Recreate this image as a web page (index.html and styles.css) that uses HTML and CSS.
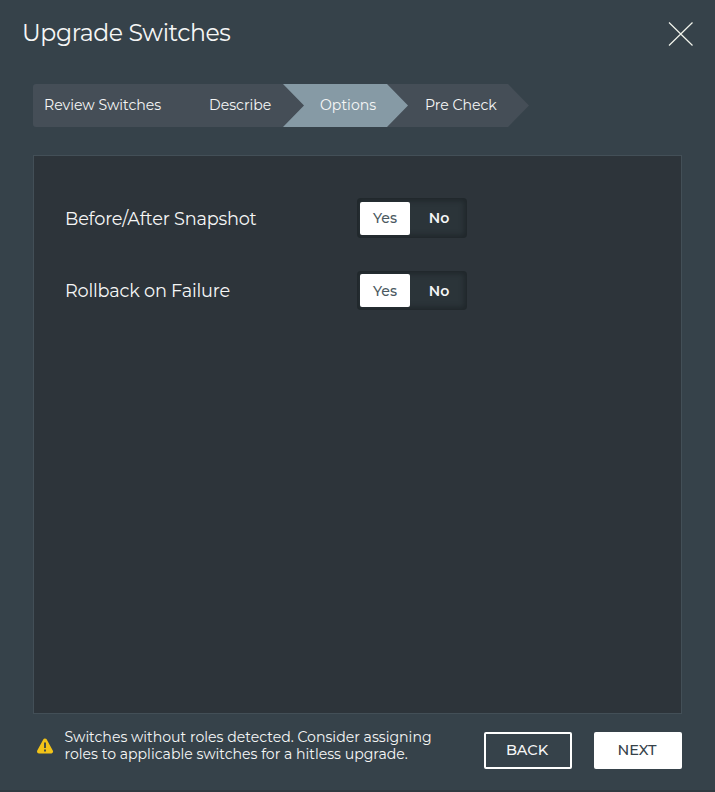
FILE: index.html
```html
<!DOCTYPE html>
<html lang="en">
<head>
<meta charset="utf-8">
<title>Upgrade Switches</title>
<link rel="stylesheet" href="styles.css">
</head>
<body>
<main class="dialog">
  <header class="header">
    <h1 class="title">Upgrade Switches</h1>
    <button class="close" aria-label="Close">
      <svg width="26" height="24" viewBox="0 0 26 24"><path d="M1 .5 24.500 23.500M24.500 .5 1 23.500" fill="none" stroke="#f2f4ec" stroke-width="1.200"/></svg>
    </button>
  </header>
  <ol class="steps">
    <li class="step step-review"><span>Review Switches</span></li>
    <li class="step step-describe"><span>Describe</span></li>
    <li class="step step-options"><span>Options</span></li>
    <li class="step step-check"><span>Pre Check</span></li>
  </ol>
  <section class="panel">
    <div class="option">
      <span class="label">Before/After Snapshot</span>
      <div class="toggle"><button class="choice selected">Yes</button><button class="choice">No</button></div>
    </div>
    <div class="option">
      <span class="label">Rollback on Failure</span>
      <div class="toggle toggle-short"><button class="choice selected">Yes</button><button class="choice">No</button></div>
    </div>
  </section>
  <footer class="footer">
    <svg class="warning" width="18" height="17" viewBox="0 0 18 17"><path d="M9 2.500 15 13.500H3Z" fill="#f2c318" stroke="#f2c318" stroke-width="4" stroke-linejoin="round"/><path d="M9 4.500v5.500M9 11.500v2" stroke="#36424a" stroke-width="1.800"/></svg>
    <p class="message">Switches without roles detected. Consider assigning<br>roles to applicable switches for a hitless upgrade.</p>
    <button class="button back">BACK</button>
    <button class="button next">NEXT</button>
  </footer>
</main>
</body>
</html>
```
FILE: styles.css
```css
* { box-sizing: border-box; }
body { margin: 0; background: #36424a; }
button { font: inherit; padding: 0; border: 0; background: none; color: inherit; }
.dialog {
  display: flex;
  flex-direction: column;
  width: 715px;
  height: 792px;
  color: #f5f6f6;
  background: #36424a;
  border-bottom: 2px solid #303a41;
  font: 14.100px/18px Montserrat, Inter, sans-serif;
}
.header {
  display: flex;
  justify-content: space-between;
  align-items: center;
  height: 84px;
  padding: 0 21px 17px 22px;
}
.title { margin: 0 0 2px; font-size: 23.600px; line-height: 32px; font-weight: 400; letter-spacing: -.4px; }
.close { width: 26px; height: 24px; }
.close svg { display: block; }
.steps {
  display: flex;
  width: 496px;
  height: 43px;
  margin: 0 0 28px 33px;
  padding: 0;
  list-style: none;
  background: #454e57;
  border-radius: 3px 0 0 3px;
  clip-path: polygon(0 0, 475px 0, 100% 50%, 475px 100%, 0 100%);
}
.step { display: flex; align-items: center; padding-bottom: 1px; white-space: nowrap; }
.step-review { width: 166px; padding-left: 11px; }
.step-describe { width: 84px; padding-left: 10px; }
.step-options {
  width: 125px;
  padding-left: 37px;
  background: #869aa5;
  clip-path: polygon(0 0, 104px 0, 100% 50%, 104px 100%, 0 100%, 21px 50%);
}
.step-check { padding-left: 17px; }
.panel {
  width: 649px;
  height: 559px;
  margin-left: 33px;
  padding: 42px 31px;
  border: 1px solid #434f57;
  background: #2d343a;
}
.option { display: flex; align-items: flex-start; height: 40px; margin-bottom: 33px; }
.label { width: 292px; font-size: 17.700px; line-height: 41px; letter-spacing: -.2px; white-space: nowrap; }
.option + .option .label { line-height: 40px; }
.toggle {
  display: flex;
  width: 110px;
  height: 40px;
  padding: 4px 3px;
  border-radius: 4px;
  background: #2b3439;
  box-shadow: inset 0 0 5px 3px #20272b;
}
.toggle-short { height: 39px; padding: 3px; }
.choice { flex: 1; height: 33px; padding: 0 0 1px 4px; font-weight: 600; border-radius: 2px; }
.choice.selected { flex: none; width: 50px; padding-left: 0; color: #4b5961; background: #fff; font-weight: 500; }
.toggle-short .choice { padding-bottom: 0; }
.footer { display: flex; padding-left: 36px; }
.warning { margin: 24px 10.500px 0 0; }
.message { width: 419.500px; margin: 15px 0 0; line-height: 17px; white-space: nowrap; }
.button { width: 88px; height: 37px; margin-top: 18px; padding: 0 2px 2px 0; border-radius: 2px; font-size: 14.500px; line-height: 18px; font-weight: 500; }
.back { border: 2px solid #fff; }
.next { margin-left: 22px; background: #fff; color: #36424a; }
```
